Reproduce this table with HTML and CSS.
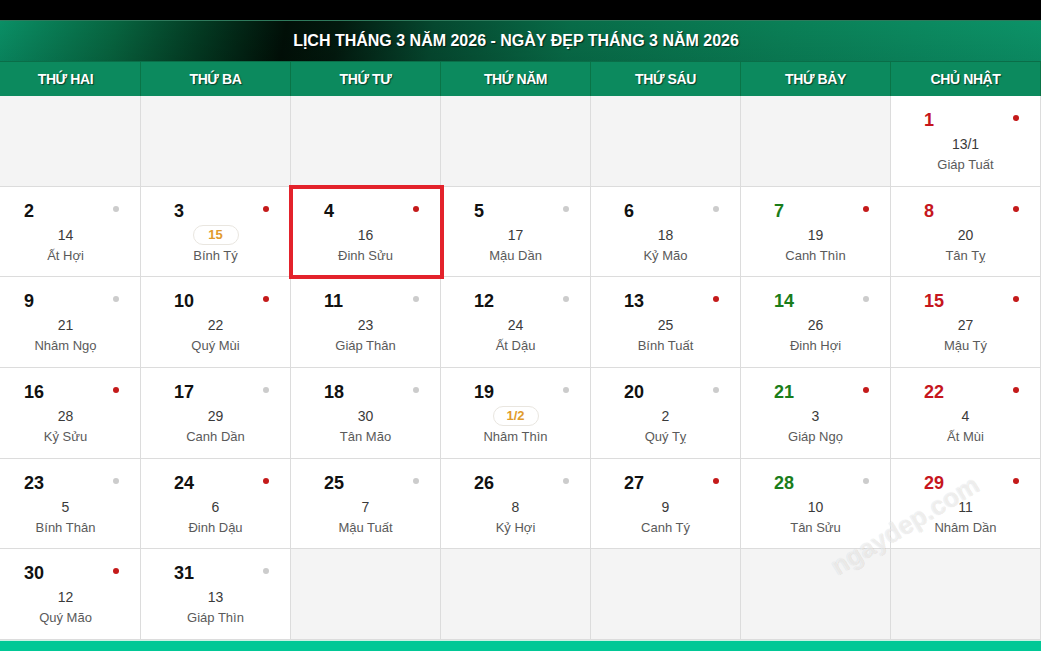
FILE: index.html
```html
<!DOCTYPE html>
<html lang="vi">
<head>
<meta charset="utf-8">
<title>Lịch tháng 3 năm 2026</title>
<link rel="stylesheet" href="styles.css">
</head>
<body>
<div class="topbar"></div>
<div class="calendar">
  <div class="title">LỊCH THÁNG 3 NĂM 2026 - NGÀY ĐẸP THÁNG 3 NĂM 2026</div>
  <div class="weekdays">
    <div class="wd">THỨ HAI</div>
    <div class="wd">THỨ BA</div>
    <div class="wd">THỨ TƯ</div>
    <div class="wd">THỨ NĂM</div>
    <div class="wd">THỨ SÁU</div>
    <div class="wd">THỨ BẢY</div>
    <div class="wd">CHỦ NHẬT</div>
  </div>
  <div class="grid">
    <div class="cell empty"></div>
    <div class="cell empty"></div>
    <div class="cell empty"></div>
    <div class="cell empty"></div>
    <div class="cell empty"></div>
    <div class="cell empty"></div>
    <div class="cell"><div class="top"><span class="num sun">1</span><span class="dot red"></span></div><div class="lunar">13/1</div><div class="canchi">Giáp Tuất</div></div>

    <div class="cell"><div class="top"><span class="num">2</span><span class="dot gray"></span></div><div class="lunar">14</div><div class="canchi">Ất Hợi</div></div>
    <div class="cell"><div class="top"><span class="num">3</span><span class="dot red"></span></div><div class="lunar"><span class="badge">15</span></div><div class="canchi">Bính Tý</div></div>
    <div class="cell today"><div class="top"><span class="num">4</span><span class="dot red"></span></div><div class="lunar">16</div><div class="canchi">Đinh Sửu</div></div>
    <div class="cell"><div class="top"><span class="num">5</span><span class="dot gray"></span></div><div class="lunar">17</div><div class="canchi">Mậu Dần</div></div>
    <div class="cell"><div class="top"><span class="num">6</span><span class="dot gray"></span></div><div class="lunar">18</div><div class="canchi">Kỷ Mão</div></div>
    <div class="cell"><div class="top"><span class="num sat">7</span><span class="dot red"></span></div><div class="lunar">19</div><div class="canchi">Canh Thìn</div></div>
    <div class="cell"><div class="top"><span class="num sun">8</span><span class="dot red"></span></div><div class="lunar">20</div><div class="canchi">Tân Tỵ</div></div>

    <div class="cell"><div class="top"><span class="num">9</span><span class="dot gray"></span></div><div class="lunar">21</div><div class="canchi">Nhâm Ngọ</div></div>
    <div class="cell"><div class="top"><span class="num">10</span><span class="dot red"></span></div><div class="lunar">22</div><div class="canchi">Quý Mùi</div></div>
    <div class="cell"><div class="top"><span class="num">11</span><span class="dot gray"></span></div><div class="lunar">23</div><div class="canchi">Giáp Thân</div></div>
    <div class="cell"><div class="top"><span class="num">12</span><span class="dot gray"></span></div><div class="lunar">24</div><div class="canchi">Ất Dậu</div></div>
    <div class="cell"><div class="top"><span class="num">13</span><span class="dot red"></span></div><div class="lunar">25</div><div class="canchi">Bính Tuất</div></div>
    <div class="cell"><div class="top"><span class="num sat">14</span><span class="dot gray"></span></div><div class="lunar">26</div><div class="canchi">Đinh Hợi</div></div>
    <div class="cell"><div class="top"><span class="num sun">15</span><span class="dot red"></span></div><div class="lunar">27</div><div class="canchi">Mậu Tý</div></div>

    <div class="cell"><div class="top"><span class="num">16</span><span class="dot red"></span></div><div class="lunar">28</div><div class="canchi">Kỷ Sửu</div></div>
    <div class="cell"><div class="top"><span class="num">17</span><span class="dot gray"></span></div><div class="lunar">29</div><div class="canchi">Canh Dần</div></div>
    <div class="cell"><div class="top"><span class="num">18</span><span class="dot gray"></span></div><div class="lunar">30</div><div class="canchi">Tân Mão</div></div>
    <div class="cell"><div class="top"><span class="num">19</span><span class="dot gray"></span></div><div class="lunar"><span class="badge">1/2</span></div><div class="canchi">Nhâm Thìn</div></div>
    <div class="cell"><div class="top"><span class="num">20</span><span class="dot gray"></span></div><div class="lunar">2</div><div class="canchi">Quý Tỵ</div></div>
    <div class="cell"><div class="top"><span class="num sat">21</span><span class="dot red"></span></div><div class="lunar">3</div><div class="canchi">Giáp Ngọ</div></div>
    <div class="cell"><div class="top"><span class="num sun">22</span><span class="dot red"></span></div><div class="lunar">4</div><div class="canchi">Ất Mùi</div></div>

    <div class="cell"><div class="top"><span class="num">23</span><span class="dot gray"></span></div><div class="lunar">5</div><div class="canchi">Bính Thân</div></div>
    <div class="cell"><div class="top"><span class="num">24</span><span class="dot red"></span></div><div class="lunar">6</div><div class="canchi">Đinh Dậu</div></div>
    <div class="cell"><div class="top"><span class="num">25</span><span class="dot gray"></span></div><div class="lunar">7</div><div class="canchi">Mậu Tuất</div></div>
    <div class="cell"><div class="top"><span class="num">26</span><span class="dot gray"></span></div><div class="lunar">8</div><div class="canchi">Kỷ Hợi</div></div>
    <div class="cell"><div class="top"><span class="num">27</span><span class="dot red"></span></div><div class="lunar">9</div><div class="canchi">Canh Tý</div></div>
    <div class="cell"><div class="top"><span class="num sat">28</span><span class="dot gray"></span></div><div class="lunar">10</div><div class="canchi">Tân Sửu</div></div>
    <div class="cell"><div class="top"><span class="num sun">29</span><span class="dot red"></span></div><div class="lunar">11</div><div class="canchi">Nhâm Dần</div></div>

    <div class="cell"><div class="top"><span class="num">30</span><span class="dot red"></span></div><div class="lunar">12</div><div class="canchi">Quý Mão</div></div>
    <div class="cell"><div class="top"><span class="num">31</span><span class="dot gray"></span></div><div class="lunar">13</div><div class="canchi">Giáp Thìn</div></div>
    <div class="cell empty"></div>
    <div class="cell empty"></div>
    <div class="cell empty"></div>
    <div class="cell empty"></div>
    <div class="cell empty"></div>
  </div>
  <div class="watermark">ngaydep.com</div>
  <div class="footer"></div>
</div>
</body>
</html>
```

FILE: styles.css
```css
html, body {
  margin: 0;
  padding: 0;
  background: #ffffff;
  overflow: hidden;
  font-family: "Liberation Sans", Arial, sans-serif;
}

.topbar {
  height: 20px;
  background: #000000;
}

.calendar {
  position: relative;
  width: 1050px;
  margin-left: -9px;
}

.title {
  height: 41px;
  box-sizing: border-box;
  border-top: 1px solid #2f7a5c;
  display: flex;
  align-items: center;
  justify-content: center;
  color: #ffffff;
  font-weight: bold;
  font-size: 16px;
  text-shadow: 1px 1px 1px rgba(0, 0, 0, 0.6);
  background:
    linear-gradient(180deg, rgba(0,0,0,0) 0%, rgba(0,0,0,0.08) 100%),
    linear-gradient(100deg, #0a9268 0%, #07643f 12%, #033a22 20%, #010f07 28%, #02190e 33%, #05482f 42%, #086c48 55%, #0a7f56 75%, #0c9368 100%);
}

.weekdays {
  display: grid;
  grid-template-columns: repeat(7, 150px);
  height: 35px;
  background: #0c8a5e;
  border-top: 1px solid #0a6e48;
  box-sizing: border-box;
}

.wd {
  display: flex;
  align-items: center;
  justify-content: center;
  color: #ffffff;
  font-weight: bold;
  font-size: 14px;
  letter-spacing: -0.4px;
  text-shadow: 1px 1px 1px rgba(0, 0, 0, 0.55);
  border-right: 1px solid #0a7447;
}

.grid {
  display: grid;
  grid-template-columns: repeat(7, 150px);
  grid-auto-rows: 90.67px;
}

.cell {
  position: relative;
  box-sizing: border-box;
  border-right: 1px solid #dcdcdc;
  border-bottom: 1px solid #dcdcdc;
  background: #ffffff;
  padding-top: 13px;
}

.cell.empty {
  background: #f4f4f4;
}

.cell.today {
  z-index: 2;
}

.cell.today::after {
  content: "";
  position: absolute;
  left: -2px;
  top: -2px;
  right: -4px;
  bottom: -3px;
  border: 4px solid #e3222b;
  pointer-events: none;
}

.top {
  display: flex;
  align-items: center;
  justify-content: space-between;
  height: 22px;
  padding-left: 33px;
  padding-right: 21px;
}

.num {
  font-size: 18px;
  font-weight: bold;
  color: #111111;
  line-height: 22px;
}

.num.sun {
  color: #c6161d;
}

.num.sat {
  color: #1a7d1a;
}

.dot {
  width: 6px;
  height: 6px;
  border-radius: 50%;
  margin-top: -4px;
}

.dot.red {
  background: #c41a1a;
}

.dot.gray {
  background: #cccccc;
}

.lunar {
  margin-top: 3px;
  height: 20px;
  line-height: 20px;
  text-align: center;
  font-size: 14px;
  color: #3a3a3a;
}

.badge {
  display: inline-block;
  box-sizing: border-box;
  width: 46px;
  height: 20px;
  line-height: 18px;
  border: 1px solid #e9e6e0;
  border-radius: 10px;
  color: #e19b2c;
  font-weight: bold;
  font-size: 13px;
  vertical-align: top;
}

.canchi {
  margin-top: 1px;
  height: 20px;
  line-height: 20px;
  text-align: center;
  font-size: 13px;
  color: #5a5a5a;
}

.watermark {
  position: absolute;
  left: 830px;
  top: 490px;
  font-size: 26px;
  font-weight: bold;
  color: rgba(255, 255, 255, 0.55);
  text-shadow: 0 0 1px rgba(0, 0, 0, 0.12), 1px 1px 0 rgba(0, 0, 0, 0.04);
  transform: rotate(-31deg);
  transform-origin: center;
  pointer-events: none;
}

.footer {
  height: 14px;
  background: #00c896;
  border-top: 1px solid #c8f2e4;
}
```
